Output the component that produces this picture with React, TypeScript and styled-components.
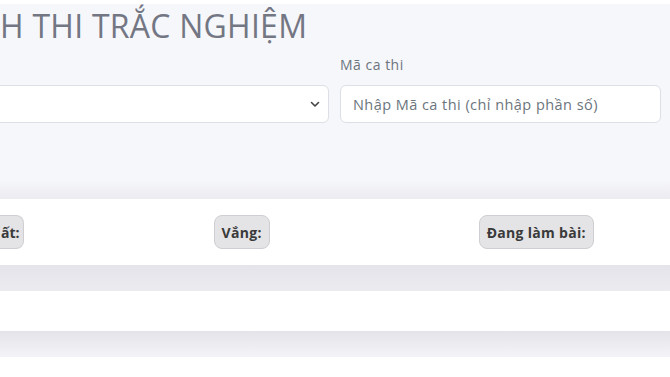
import React from "react";
import styled, { createGlobalStyle } from "styled-components";

const GlobalStyle = createGlobalStyle`
  html, body {
    margin: 0;
    padding: 0;
    background: #ffffff;
    font-family: "Open Sans", "Liberation Sans", sans-serif;
    overflow: hidden;
  }
`;

const Page = styled.div`
  width: 670px;
  height: 377px;
  padding-top: 4px;
  background: #ffffff;
  box-sizing: border-box;
  overflow: hidden;
`;

const FilterPanel = styled.section`
  height: 195px;
  box-sizing: border-box;
  background: linear-gradient(to bottom, #f6f7fb 0%, #f6f7fb 90%, #ececf0 100%);
`;

const Title = styled.h2`
  margin: 0;
  padding-top: 3px;
  font-size: 32px;
  font-weight: 400;
  line-height: 38px;
  color: #737683;
  letter-spacing: 0.25px;
  white-space: nowrap;
`;

const FormRow = styled.div`
  display: grid;
  grid-template-columns: 369px 321px;
  column-gap: 11px;
  margin-left: -40px;
  margin-top: 10px;
`;

const Field = styled.div`
  display: flex;
  flex-direction: column;
`;

const Label = styled.label`
  height: 30px;
  font-size: 14px;
  line-height: 20px;
  letter-spacing: 0.5px;
  color: #6c757d;
`;

const SelectBox = styled.div`
  position: relative;
  height: 38px;
  box-sizing: border-box;
  background: #ffffff;
  border: 1px solid #dcdfe6;
  border-radius: 6px;
`;

const Chevron = styled.svg`
  position: absolute;
  right: 8px;
  top: 14px;
`;

const TextInput = styled.input`
  height: 38px;
  box-sizing: border-box;
  padding: 0 12px;
  background: #ffffff;
  border: 1px solid #dcdfe6;
  border-radius: 6px;
  font-family: inherit;
  font-size: 14.5px;
  letter-spacing: 0.45px;
  color: #495057;
  outline: none;

  &::placeholder {
    color: #6c757d;
  }
`;

const StatsBand = styled.div`
  display: flex;
  align-items: center;
  height: 66px;
  background: #ffffff;
`;

const Badge = styled.div<{ $offset: number }>`
  margin-left: ${p => p.$offset}px;
  height: 34px;
  box-sizing: border-box;
  display: flex;
  align-items: center;
  padding: 0 7px;
  background: #e4e4e6;
  border: 1px solid #cfcfd3;
  border-radius: 8px;
  font-size: 14px;
  font-weight: 700;
  letter-spacing: 0.3px;
  color: #3a3a3a;
  white-space: nowrap;
`;

const EdgeBadge = styled(Badge)`
  padding: 0 3px 0 1px;
  letter-spacing: 0;
  border-left-width: 0;
  border-radius: 0 8px 8px 0;
`;

const Stripe = styled.div<{ $fade?: boolean }>`
  height: 26px;
  background: ${p =>
    p.$fade
      ? "linear-gradient(to bottom, #e3e3e9, #f4f4f8)"
      : "linear-gradient(to bottom, #e4e4ea, #ebebf0)"};
`;

const BlankRow = styled.div<{ $height: number }>`
  height: ${p => p.$height}px;
  background: #ffffff;
`;

export default function App() {
  return (
    <>
      <GlobalStyle />
      <Page>
        <FilterPanel>
          <Title>H THI TRẮC NGHIỆM</Title>
          <FormRow>
            <Field>
              <Label />
              <SelectBox>
                <Chevron width="10" height="8" viewBox="0 0 10 8">
                  <path d="M1.5 2.5 L5 6 L8.5 2.5" fill="none" stroke="#444" strokeWidth="1.6" strokeLinecap="round" strokeLinejoin="round" />
                </Chevron>
              </SelectBox>
            </Field>
            <Field>
              <Label>Mã ca thi</Label>
              <TextInput placeholder="Nhập Mã ca thi (chỉ nhập phần số)" />
            </Field>
          </FormRow>
        </FilterPanel>
        <StatsBand>
          <EdgeBadge $offset={0}>ất:</EdgeBadge>
          <Badge $offset={190}>Vắng:</Badge>
          <Badge $offset={209}>Đang làm bài:</Badge>
        </StatsBand>
        <Stripe />
        <BlankRow $height={40} />
        <Stripe $fade />
        <BlankRow $height={20} />
      </Page>
    </>
  );
}
